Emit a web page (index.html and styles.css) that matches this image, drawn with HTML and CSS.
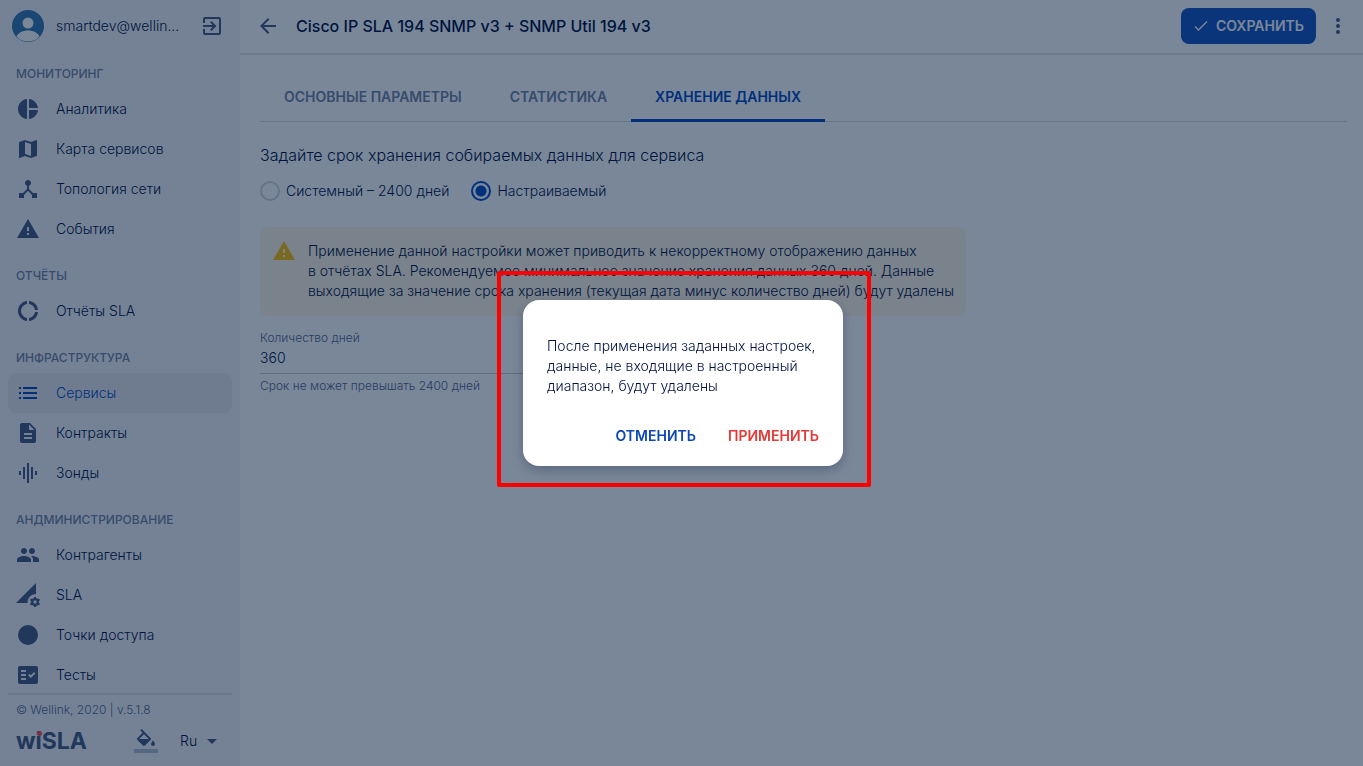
FILE: index.html
```html
<!DOCTYPE html>
<html lang="ru">
<head>
    <meta charset="UTF-8">
    <meta name="viewport" content="width=device-width, initial-scale=1">
    <title>wiSLA</title>
    <link rel="stylesheet" href="styles.css">
</head>
<body>
<div class="app">
    <aside class="sidebar">
        <div class="user">
            <svg class="avatar" viewBox="0 0 32 32">
                <circle cx="16" cy="16" r="16" fill="#3577ae"/>
                <circle cx="16" cy="13" r="5.5" fill="#fff"/>
                <path d="M4.500 26.500C6.500 22.500 11 20.500 16 20.500s9.500 2 11.500 6A15.500 15.500 0 0 1 4.500 26.500z" fill="#fff"/>
            </svg>
            <span class="user-name">smartdev@wellin...</span>
            <button class="icon-button" aria-label="Выйти">
                <svg class="icon" viewBox="0 0 24 24"><path d="M10.090 15.590 11.500 17l5-5-5-5-1.410 1.410L12.670 11H3v2h9.670zM19 3H5a2 2 0 0 0-2 2v4h2V5h14v14H5v-4H3v4a2 2 0 0 0 2 2h14a2 2 0 0 0 2-2V5a2 2 0 0 0-2-2z"/></svg>
            </button>
        </div>

        <nav class="menu">
            <h2 class="menu-title">МОНИТОРИНГ</h2>
            <a class="menu-item" href="#">
                <svg class="icon" viewBox="0 0 24 24"><path d="M11 2v20C5.900 21.500 2 17.200 2 12s3.900-9.500 9-10zm2 0v9h9c-.5-4.700-4.200-8.500-9-9zm0 11v9c4.700-.5 8.500-4.200 9-9z"/></svg>
                Аналитика
            </a>
            <a class="menu-item" href="#">
                <svg class="icon" viewBox="0 0 24 24"><path d="M20.500 3l-.16.03L15 5.100 9 3 3.360 4.900c-.21.07-.36.25-.36.48V20.500c0 .28.22.5.5.5l.16-.03L9 18.900l6 2.100 5.640-1.900c.21-.07.36-.25.36-.48V3.500c0-.28-.22-.5-.5-.5zM15 19l-6-2.110V5l6 2.110V19z"/></svg>
                Карта сервисов
            </a>
            <a class="menu-item" href="#">
                <svg class="icon" viewBox="0 0 24 24"><path d="M17 16l-4-4V8.820C14.160 8.400 15 7.300 15 6c0-1.660-1.340-3-3-3S9 4.340 9 6c0 1.300.84 2.400 2 2.820V12l-4 4H3v5h5v-3.050l4-4.200 4 4.200V21h5v-5h-4z"/></svg>
                Топология сети
            </a>
            <a class="menu-item" href="#">
                <svg class="icon" viewBox="0 0 24 24"><path d="M1 21h22L12 2 1 21zm12-3h-2v-2h2v2zm0-4h-2v-4h2v4z"/></svg>
                События
            </a>

            <h2 class="menu-title">ОТЧЁТЫ</h2>
            <a class="menu-item" href="#">
                <svg class="icon" viewBox="0 0 24 24"><path d="M11 5.080V2c-5 .5-9 4.810-9 10s4 9.500 9 10v-3.080c-3-.48-6-3.400-6-6.920s3-6.440 6-6.920zM18.970 11H22c-.47-5-4-8.530-9-9v3.080C16 5.510 18.540 8 18.970 11zM13 18.920V22c5-.47 8.530-4 9-9h-3.030c-.43 3-2.970 5.490-5.970 5.920z"/></svg>
                Отчёты SLA
            </a>

            <h2 class="menu-title">ИНФРАСТРУКТУРА</h2>
            <a class="menu-item active" href="#">
                <svg class="icon" viewBox="0 0 24 24"><path d="M3 13h2v-2H3v2zm0 5h2v-2H3v2zM3 8h2V6H3v2zm4 5h14v-2H7v2zm0 5h14v-2H7v2zM7 6v2h14V6H7z"/></svg>
                Сервисы
            </a>
            <a class="menu-item" href="#">
                <svg class="icon" viewBox="0 0 24 24"><path d="M14 2H6c-1.100 0-2 .9-2 2v16c0 1.100.9 2 2 2h12c1.100 0 2-.9 2-2V8l-6-6zm2 16H8v-2h8v2zm0-4H8v-2h8v2zm-3-5V3.500L18.500 9H13z"/></svg>
                Контракты
            </a>
            <a class="menu-item" href="#">
                <svg class="icon" viewBox="0 0 24 24"><path d="M7 18h2V6H7v12zm4 4h2V2h-2v20zm-8-8h2v-4H3v4zm12 4h2V6h-2v12zm4-8v4h2v-4h-2z"/></svg>
                Зонды
            </a>

            <h2 class="menu-title">АНДМИНИСТРИРОВАНИЕ</h2>
            <a class="menu-item" href="#">
                <svg class="icon" viewBox="0 0 24 24"><path d="M16 11c1.660 0 2.990-1.340 2.990-3S17.660 5 16 5s-3 1.340-3 3 1.340 3 3 3zm-8 0c1.660 0 2.990-1.340 2.990-3S9.660 5 8 5 5 6.340 5 8s1.340 3 3 3zm0 2c-2.330 0-7 1.170-7 3.500V19h14v-2.500c0-2.330-4.670-3.500-7-3.500zm8 0c-.29 0-.62.02-.97.05 1.160.84 1.970 1.970 1.970 3.450V19h6v-2.500c0-2.330-4.670-3.500-7-3.500z"/></svg>
                Контрагенты
            </a>
            <a class="menu-item" href="#">
                <svg class="icon" viewBox="0 0 24 24"><path d="M20 0v11c-5 0-8.500 3.500-8.500 9H0z"/><circle cx="19" cy="19" r="2.800" fill="none" stroke="currentColor" stroke-width="2.200"/><path d="M18 14h2v2h-2zm0 8h2v2h-2zM13.900 17.300l1-1.700 1.900 1.100-1 1.700zm7.300 4 1-1.700 1.900 1.100-1 1.700zm-7.300-.6 1.900-1.100 1 1.700-1.900 1.100zm7.300-4 1.900-1.100 1 1.700-1.900 1.100z"/></svg>
                SLA
            </a>
            <a class="menu-item" href="#">
                <svg class="icon" viewBox="0 0 24 24"><circle cx="12" cy="12" r="10"/></svg>
                Точки доступа
            </a>
            <a class="menu-item" href="#">
                <svg class="icon" viewBox="0 0 24 24"><path fill-rule="evenodd" d="M20 3H4c-1.100 0-2 .9-2 2v14c0 1.100.9 2 2 2h16c1.100 0 2-.9 2-2V5c0-1.100-.9-2-2-2zM10 17H5v-2h5v2zm0-4H5v-2h5v2zm0-4H5V7h5v2zm4.820 6L12 12.160l1.410-1.410 1.410 1.420L17.990 9l1.420 1.420L14.820 15z"/></svg>
                Тесты
            </a>
        </nav>

        <footer class="sidebar-footer">
            <p class="copyright">© Wellink, 2020 | v.5.1.8</p>
            <div class="footer-row">
                <span class="logo">w<span class="logo-i">i</span>SLA</span>
                <button class="icon-button" aria-label="Цветовая тема">
                    <svg class="icon" viewBox="0 0 24 24"><path d="M16.560 8.940 7.620 0 6.210 1.410l2.380 2.380-5.150 5.150a1.490 1.490 0 0 0 0 2.120l5.500 5.500c.29.29.68.44 1.060.44s.77-.15 1.060-.44l5.500-5.500c.59-.58.59-1.530 0-2.120zM5.210 10 10 5.210 14.790 10H5.210zM19 11.500s-2 2.170-2 3.500c0 1.100.9 2 2 2s2-.9 2-2c0-1.330-2-3.500-2-3.500z"/><path d="M0 20h24v4H0z" opacity=".36"/></svg>
                </button>
                <select class="lang" aria-label="Язык">
                    <option>Ru</option>
                    <option>En</option>
                </select>
                <svg class="icon" viewBox="0 0 24 24"><path d="M7 10l5 5 5-5z"/></svg>
            </div>
        </footer>
    </aside>

    <main class="main">
        <header class="topbar">
            <button class="icon-button" aria-label="Назад">
                <svg class="icon" viewBox="0 0 24 24"><path d="M20 11H7.830l5.590-5.590L12 4l-8 8 8 8 1.410-1.410L7.830 13H20v-2z"/></svg>
            </button>
            <h1 class="title">Cisco IP SLA 194 SNMP v3 + SNMP Util 194 v3</h1>
            <button class="save-button">
                <svg viewBox="0 0 16 16"><path d="M2 8.500 5.500 12 14 3.500" fill="none" stroke="currentColor" stroke-width="1.300"/></svg>
                СОХРАНИТЬ
            </button>
            <button class="icon-button" aria-label="Ещё">
                <svg class="icon" viewBox="0 0 24 24"><circle cx="12" cy="6" r="2"/><circle cx="12" cy="12" r="2"/><circle cx="12" cy="18" r="2"/></svg>
            </button>
        </header>

        <div class="content">
            <div class="tabs" role="tablist">
                <button class="tab" role="tab">ОСНОВНЫЕ ПАРАМЕТРЫ</button>
                <button class="tab" role="tab">СТАТИСТИКА</button>
                <button class="tab active" role="tab" aria-selected="true">ХРАНЕНИЕ ДАННЫХ</button>
            </div>

            <p class="lead">Задайте срок хранения собираемых данных для сервиса</p>
            <div class="radios">
                <label class="radio"><input type="radio" name="storage">Системный – 2400 дней</label>
                <label class="radio"><input type="radio" name="storage" checked>Настраиваемый</label>
            </div>

            <div class="warning">
                <svg class="icon" viewBox="0 0 24 24"><path d="M1 21h22L12 2 1 21zm12-3h-2v-2h2v2zm0-4h-2v-4h2v4z"/></svg>
                <p>Применение данной настройки может приводить к некорректному отображению данных<br>
                    в отчётах SLA. Рекомендуемое минимальное значение хранения данных 360 дней. Данные<br>
                    выходящие за значение срока хранения (текущая дата минус количество дней) будут удалены</p>
            </div>

            <div class="field">
                <label for="days">Количество дней</label>
                <input id="days" type="text" value="360">
                <span class="hint">Срок не может превышать 2400 дней</span>
            </div>
        </div>
    </main>
</div>

<div class="backdrop">
    <div class="dialog" role="alertdialog" aria-labelledby="dialog-text">
        <div class="highlight"></div>
        <p id="dialog-text">После применения заданных настроек, данные, не входящие в настроенный диапазон, будут удалены</p>
        <div class="dialog-actions">
            <button class="text-button">ОТМЕНИТЬ</button>
            <button class="text-button danger">ПРИМЕНИТЬ</button>
        </div>
    </div>
</div>
</body>
</html>
```
FILE: styles.css
```css
* {
    box-sizing: border-box;
}

body {
    margin: 0;
    font-family: Inter, "Liberation Sans", sans-serif;
    font-size: 14px;
    font-weight: 300;
    line-height: 20px;
    color: #001040;
    background: #fff;
}

h1, h2, p {
    margin: 0;
}

button, input, select {
    font: inherit;
    color: inherit;
    border: none;
    background: none;
    padding: 0;
}

.app {
    display: flex;
    height: 100vh;
}

.icon {
    display: block;
    flex: none;
    width: 24px;
    height: 24px;
    color: #46587f;
    fill: currentColor;
}

.icon-button {
    flex: none;
}

/* sidebar */

.sidebar {
    display: flex;
    flex-direction: column;
    flex: none;
    width: 240px;
    background: #f4f5f7;
}

.user {
    display: flex;
    align-items: center;
    gap: 12px;
    padding: 10px 16px 5px 12px;
}

.avatar {
    flex: none;
    width: 32px;
    height: 32px;
}

.user-name {
    flex: 1;
    white-space: nowrap;
}

.menu {
    flex: 1;
    min-height: 0;
    overflow: hidden;
    padding: 0 8px;
}

.menu-title {
    padding: 19px 8px 7px;
    font-size: 12px;
    line-height: 16px;
    font-weight: 500;
    color: #74829f;
}

.menu-item {
    display: flex;
    align-items: center;
    gap: 16px;
    height: 40px;
    padding: 0 8px;
    border-radius: 8px;
    color: inherit;
    text-decoration: none;
}

.menu-item.active {
    background: #e9e9ea;
    color: #0049c0;
}

.menu-item.active .icon {
    color: #0049c0;
}

.sidebar-footer {
    margin: 0 8px;
    padding: 5px 8px 13px;
    border-top: 2px solid #e0e2e6;
}

.copyright {
    font-size: 12px;
    color: #56648a;
}

.footer-row {
    display: flex;
    align-items: center;
    padding-top: 9px;
}

.logo {
    width: 118px;
    font-size: 23px;
    line-height: 24px;
    font-weight: 700;
    color: #46587f;
}

.logo-i {
    position: relative;
}

.logo-i::before {
    content: "";
    position: absolute;
    top: 4px;
    left: 1px;
    width: 5px;
    height: 5px;
    border-radius: 50%;
    background: #f04a55;
}

.lang {
    width: 20px;
    margin-left: 22px;
    appearance: none;
}

/* main part */

.main {
    flex: 1;
    min-width: 0;
}

.topbar {
    display: flex;
    align-items: center;
    height: 55px;
    padding: 0 13px 1px 16px;
    border-bottom: 2px solid #e4e6ea;
}

.title {
    flex: 1;
    margin-left: 16px;
    font-size: 16px;
    font-weight: 500;
}

.save-button {
    display: flex;
    align-items: center;
    gap: 7px;
    height: 36px;
    margin-right: 10px;
    padding: 0 12px;
    border-radius: 8px;
    background: #1554c0;
    color: #fff;
    font-weight: 600;
}

.save-button svg {
    width: 16px;
    height: 16px;
}

.content {
    padding: 18px 16px 0 20px;
}

.tabs {
    display: flex;
    height: 49px;
    border-bottom: 1px solid #d4d8df;
}

.tab {
    height: 49px;
    padding: 2px 24px 0;
    border-bottom: 3px solid transparent;
    font-weight: 600;
    color: #74829f;
}

.tab.active {
    border-bottom-color: #0049c0;
    color: #0049c0;
}

.lead {
    margin-top: 21px;
    font-size: 16px;
    line-height: 24px;
}

.radios {
    display: flex;
    gap: 22px;
    margin-top: 14px;
}

.radio {
    display: flex;
    align-items: center;
    gap: 6px;
}

.radio input {
    appearance: none;
    width: 20px;
    height: 20px;
    margin: 0;
    border: 2px solid #d4d6dc;
    border-radius: 50%;
}

.radio input:checked {
    border-color: #0049c0;
    background: radial-gradient(circle, #0049c0 5px, transparent 6px);
}

.warning {
    display: flex;
    gap: 12px;
    width: fit-content;
    margin-top: 26px;
    padding: 14px 12px 15px;
    border-radius: 8px;
    background: #fff6e3;
}

.warning .icon {
    margin-top: -2px;
    color: #ffc107;
}

.field {
    display: flex;
    flex-direction: column;
    width: 320px;
    margin-top: 12px;
    font-size: 12px;
    color: #56648a;
}

.field input {
    height: 26px;
    padding-bottom: 6px;
    border-bottom: 1px solid #c3c8d1;
    font-size: 14px;
    color: #001040;
}

.hint {
    margin-top: 2px;
}

/* confirmation */

.backdrop {
    position: fixed;
    inset: 0;
    display: flex;
    align-items: center;
    justify-content: center;
    padding-left: 3px;
    background: rgba(0, 24, 59, .52);
}

.dialog {
    position: relative;
    width: 320px;
    padding: 36px 16px 12px 24px;
    border-radius: 16px;
    background: #fff;
    box-shadow: 0 4px 12px rgba(9, 30, 66, .3);
}

.dialog-actions {
    display: flex;
    justify-content: flex-end;
    gap: 16px;
    margin-top: 22px;
}

.text-button {
    height: 36px;
    padding: 0 8px;
    font-weight: 600;
    color: #0d47b5;
}

.text-button.danger {
    color: #e53935;
}

.highlight {
    position: absolute;
    inset: -29px -28px -21px -26px;
    border: 4px solid #f00;
    border-radius: 2px;
    pointer-events: none;
}
```
